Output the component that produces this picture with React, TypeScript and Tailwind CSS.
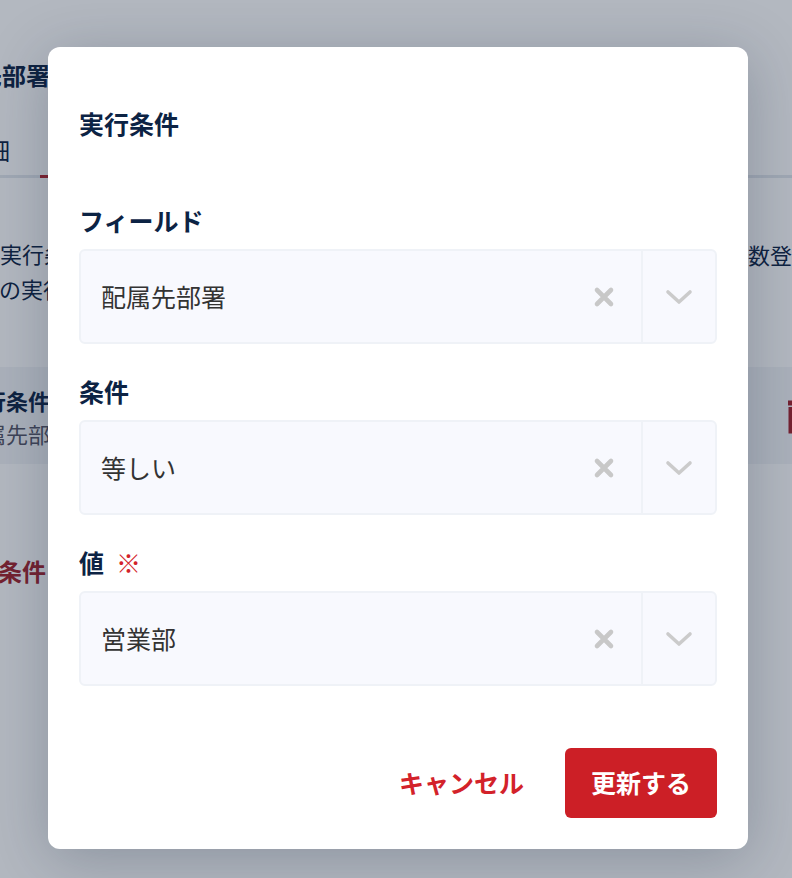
import React from "react";

const navy = "text-[#0c2344]";

function ClearIcon() {
  return (
    <svg width="24" height="24" viewBox="0 0 24 24" fill="none">
      <path d="M5 5 L19 19 M19 5 L5 19" stroke="#c8c8c8" strokeWidth="4.6" strokeLinecap="round" />
    </svg>
  );
}

function ChevronIcon() {
  return (
    <svg width="28" height="16" viewBox="0 0 28 16" fill="none">
      <path d="M3 3 L14 13 L25 3" stroke="#cbcbcb" strokeWidth="3.6" strokeLinecap="round" strokeLinejoin="round" />
    </svg>
  );
}

type SelectBoxProps = {
  value: string;
};

function SelectBox({ value }: SelectBoxProps) {
  return (
    <div className="flex h-[95px] items-stretch rounded-md border-2 border-[#eff2f7] bg-[#f8f9fe]">
      <div className="flex flex-1 items-center pl-5 text-[25px] text-[#333]">{value}</div>
      <div className="flex w-[74px] items-center justify-center">
        <ClearIcon />
      </div>
      <div className="w-[2px] bg-[#eff2f7]" />
      <div className="flex w-[72px] items-center justify-center">
        <ChevronIcon />
      </div>
    </div>
  );
}

function Field({ label, required, value }: { label: string; required?: boolean; value: string }) {
  return (
    <div>
      <p className={`mb-[11px] text-[25px] font-bold leading-[36px] ${navy}`}>
        {label}
        {required && <span className="ml-3 text-[#d3222a]">※</span>}
      </p>
      <SelectBox value={value} />
    </div>
  );
}

function TrashIcon() {
  return (
    <svg width="30" height="36" viewBox="0 0 30 36" fill="none">
      <path d="M2 5 H28 M10 5 V2 H20 V5 M5 9 V33 H25 V9" stroke="#a3222c" strokeWidth="5" />
    </svg>
  );
}

function BackgroundPage() {
  return (
    <div className={`h-[878px] w-full overflow-hidden bg-white ${navy}`}>
      <div className="pt-[57px]">
        <p className="-ml-[70px] text-[24px] font-bold leading-[36px]">配属先部署</p>
      </div>
      <div className="mt-[39px] flex border-b-[3px] border-[#e3e7ee]">
        <div className="-ml-[38px] w-[78px] shrink-0 pb-[7px] text-[24px] leading-[36px]">詳細</div>
        <div className="-mb-[3px] w-[140px] border-b-[3px] border-[#b3222c]" />
      </div>
      <div className="mt-[58px] flex text-[22px] leading-[35px]">
        <div className="w-[748px] shrink-0">
          <p>実行条件の設定</p>
          <p className="-ml-[1px]">の実行条件</p>
        </div>
        <p className="whitespace-nowrap pt-[1px]">数登録可能</p>
      </div>
      <div className="mt-[61px] flex h-[97px] items-center justify-between bg-[#f4f5f8]">
        <div className="-ml-[16px] pt-[2px]">
          <p className="text-[22px] font-bold leading-[33px]">行条件</p>
          <p className="text-[22px] leading-[33px] text-[#556]">属先部署</p>
        </div>
        <div className="-mr-[24px]">
          <TrashIcon />
        </div>
      </div>
      <div className="mt-[89px]">
        <p className="-ml-[50px] text-[24px] font-bold leading-[36px] text-[#a3222c]">実行条件</p>
      </div>
    </div>
  );
}

export default function App() {
  return (
    <div className="relative h-[878px] w-full overflow-hidden font-['Noto_Sans_CJK_JP','Noto_Sans',sans-serif]">
      <BackgroundPage />
      <div className="absolute inset-0 bg-[rgba(20,35,60,0.32)]">
        <div className="ml-[48px] mt-[47px] w-[700px] rounded-xl bg-white px-[31px] pb-[31px] pt-[58px] shadow-[0_10px_60px_rgba(20,35,60,0.25)]">
          <h2 className={`text-[25px] font-bold leading-[36px] ${navy}`}>実行条件</h2>
          <div className="mt-[61px] flex flex-col gap-[29px]">
            <Field label="フィールド" value="配属先部署" />
            <Field label="条件" value="等しい" />
            <Field label="値" required value="営業部" />
          </div>
          <div className="mt-[62px] flex items-center justify-end gap-[41px]">
            <button className="text-[25px] font-bold text-[#d3222a]">キャンセル</button>
            <button className="h-[70px] w-[152px] rounded-md bg-[#cc1f26] text-[25px] font-bold text-white">
              更新する
            </button>
          </div>
        </div>
      </div>
    </div>
  );
}
